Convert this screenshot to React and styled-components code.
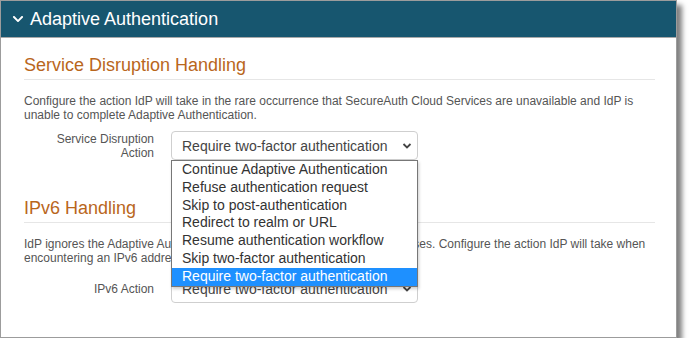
import React from 'react'
import styled, { createGlobalStyle } from 'styled-components'
import { FaChevronDown } from 'react-icons/fa'

const GlobalStyle = createGlobalStyle`
  body {
    margin: 0;
    background: #fff;
    font-family: "Liberation Sans", Arial, sans-serif;
  }
`

const Panel = styled.section`
  box-sizing: border-box;
  width: 677px;
  height: 338px;
  border: 1px solid #9c9c9c;
  background: #fff;
  box-shadow: 5px 5px 5px rgba(0, 0, 0, 0.5);
`

const Header = styled.div`
  display: flex;
  align-items: center;
  gap: 6px;
  height: 36px;
  padding-left: 11px;
  background: #17566f;
  border-bottom: 1px solid #a8a8a8;
  color: #fff;
  font-size: 18px;
  svg {
    font-size: 12px;
  }
`

const Body = styled.div`
  padding: 17px 21px 0 23px;
`

const Heading = styled.h3`
  margin: 0;
  font-size: 18px;
  font-weight: normal;
  line-height: 20px;
  padding-bottom: 4px;
  border-bottom: 1px solid #e6e6e6;
  color: #b9661c;
  margin-top: ${(p) => (p.$first ? '0' : '38px')};
`

const Text = styled.p`
  margin: 14px 0 9px;
  font-size: 12px;
  line-height: 14px;
  color: #555;
`

const Row = styled.div`
  display: grid;
  grid-template-columns: 130px 247px;
  column-gap: 17px;
  align-items: center;
`

const Label = styled.label`
  text-align: right;
  font-size: 12px;
  line-height: 14px;
  color: #555;
`

const SelectWrap = styled.div`
  position: relative;
`

const Select = styled.div`
  box-sizing: border-box;
  display: flex;
  align-items: center;
  justify-content: space-between;
  height: 29px;
  padding: 0 5px 0 10px;
  border: 1px solid #cfcfcf;
  border-radius: 4px;
  font-size: 14px;
  color: #444;
  svg {
    width: 10px;
    height: 10px;
  }
`

const Menu = styled.ul`
  position: absolute;
  top: 100%;
  left: 0;
  right: 0;
  z-index: 2;
  margin: 0;
  padding: 0;
  list-style: none;
  background: #fff;
  border: 1px solid #777;
  box-shadow: 1px 2px 3px rgba(0, 0, 0, 0.2);
`

const Option = styled.li`
  height: 17.8px;
  line-height: 17.8px;
  padding-left: 10px;
  font-size: 14px;
  color: ${(p) => (p.$active ? '#fff' : '#333')};
  background: ${(p) => (p.$active ? '#1e90ff' : 'transparent')};
`

const Caret = () => (
  <svg viewBox="0 0 10 10">
    <polyline points="1.5,3 5,6.5 8.5,3" fill="none" stroke="#444" strokeWidth="1.8" />
  </svg>
)

const options = [
  'Continue Adaptive Authentication',
  'Refuse authentication request',
  'Skip to post-authentication',
  'Redirect to realm or URL',
  'Resume authentication workflow',
  'Skip two-factor authentication',
  'Require two-factor authentication',
]

const App = () => {
  const selected = 'Require two-factor authentication'

  return (
    <>
      <GlobalStyle />
      <Panel>
        <Header>
          <FaChevronDown />
          <span>Adaptive Authentication</span>
        </Header>
        <Body>
          <Heading $first>Service Disruption Handling</Heading>
          <Text>
            Configure the action IdP will take in the rare occurrence that SecureAuth Cloud Services are unavailable and IdP is
            unable to complete Adaptive Authentication.
          </Text>
          <Row>
            <Label>Service Disruption Action</Label>
            <SelectWrap>
              <Select>
                <span>{selected}</span>
                <Caret />
              </Select>
              <Menu>
                {options.map((item) => (
                  <Option key={item} $active={item === selected}>{item}</Option>
                ))}
              </Menu>
            </SelectWrap>
          </Row>

          <Heading>IPv6 Handling</Heading>
          <Text>
            IdP ignores the Adaptive Authentication settings for incoming IPv6 addresses. Configure the action IdP will take when
            <br />
            encountering an IPv6 address.
          </Text>
          <Row>
            <Label>IPv6 Action</Label>
            <SelectWrap>
              <Select>
                <span>{selected}</span>
                <Caret />
              </Select>
            </SelectWrap>
          </Row>
        </Body>
      </Panel>
    </>
  )
}

export default App
